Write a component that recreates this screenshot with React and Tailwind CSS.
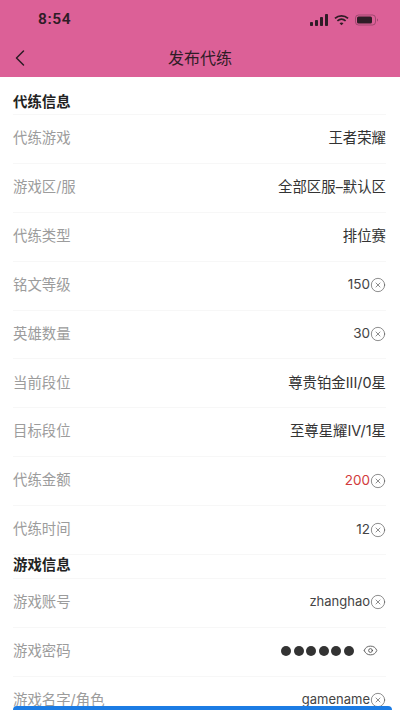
import { ChevronLeft, CircleX, Eye } from "lucide-react";

const font = "font-['Inter','Noto_Sans_CJK_SC',sans-serif]";

function Row({ label, value, clear, red, small, children }) {
  let valueClass = "text-[14.4px] text-[#333]";
  if (red) valueClass = "text-[13.5px] text-[#d23b3b]";
  else if (small) valueClass = "text-[13px] text-[#444]";
  else if (clear) valueClass = "text-[13.5px] text-[#444]";
  return (
    <div className="flex h-[48.9px] items-center justify-between border-b border-[#f7f7f7] pb-[2px]">
      <span className="text-[14.4px] text-[#9c9c9c]">{label}</span>
      <div className="flex items-center">
        {value && <span className={valueClass}>{value}</span>}
        {clear && <CircleX size={16} strokeWidth={1} className="mt-[1px] text-[#555]" />}
        {children}
      </div>
    </div>
  );
}

export default function App() {
  return (
    <div className={`relative h-[710px] w-[400px] overflow-hidden bg-white ${font}`}>
      <header className="h-[77px] bg-[#dc6097] text-[#2f1c26]">
        <div className="flex h-[39px] items-center justify-between pl-[38px] pr-[21px]">
          <span className="text-[15.5px] font-semibold tracking-[0.6px] font-['Roboto',sans-serif]">8:54</span>
          <div className="flex items-center gap-[6px]">
            <svg width="18" height="12" viewBox="0 0 18 12" fill="currentColor">
              <rect x="0" y="8" width="3" height="4" rx="0.8" />
              <rect x="5" y="6" width="3" height="6" rx="0.8" />
              <rect x="10" y="3" width="3" height="9" rx="0.8" />
              <rect x="15" y="0" width="3" height="12" rx="0.8" />
            </svg>
            <svg width="15" height="12" viewBox="0 0 16 12" fill="none" stroke="currentColor" strokeWidth="1.9">
              <path d="M1 4.2C5 .6 11 .6 15 4.2" />
              <path d="M3.6 7C6.2 4.8 9.8 4.8 12.4 7" />
              <path d="M8 11.6 5.9 9.4C7.1 8.4 8.9 8.4 10.1 9.4Z" fill="currentColor" stroke="none" />
            </svg>
            <svg width="24" height="12" viewBox="0 0 24 12" fill="none">
              <rect x="0.5" y="1" width="20" height="10" rx="3" stroke="currentColor" strokeOpacity="0.35" />
              <rect x="2" y="2.5" width="15" height="7" rx="1.5" fill="currentColor" />
              <path d="M22 4.5c1 .4 1 2.6 0 3z" fill="currentColor" fillOpacity="0.5" />
            </svg>
          </div>
        </div>
        <div className="relative flex h-[38px] items-center justify-center">
          <ChevronLeft size={28} strokeWidth={1.3} className="absolute left-[6px] top-[5px]" />
          <h1 className="text-[16px] font-normal">发布代练</h1>
        </div>
      </header>

      <main className="px-[13px] pr-[14px]">
        <h2 className="flex h-[38px] items-center border-b border-[#f7f7f7] pt-[12px] text-[14.4px] font-bold text-[#222]">代练信息</h2>
        <Row label="代练游戏" value="王者荣耀" />
        <Row label="游戏区/服" value="全部区服–默认区" />
        <Row label="代练类型" value="排位赛" />
        <Row label="铭文等级" value="150" clear />
        <Row label="英雄数量" value="30" clear />
        <Row label="当前段位" value="尊贵铂金III/0星" />
        <Row label="目标段位" value="至尊星耀IV/1星" />
        <Row label="代练金额" value="200" clear red />
        <Row label="代练时间" value="12" clear />
        <h2 className="flex h-[24px] items-center border-b border-[#f7f7f7] pb-[4px] text-[14.4px] font-bold text-[#222]">游戏信息</h2>
        <Row label="游戏账号" value="zhanghao" clear small />
        <Row label="游戏密码">
          <div className="flex gap-[2.6px]">
            {[0, 1, 2, 3, 4, 5].map((i) => (
              <span key={i} className="h-[10px] w-[10px] rounded-full bg-[#333]" />
            ))}
          </div>
          <Eye size={15} strokeWidth={1.3} className="ml-[9px] mr-[8px] text-[#444]" />
        </Row>
        <Row label="游戏名字/角色" value="gamename" clear small />
      </main>

      {/* bottom button, cut off by the window */}
      <div className="absolute bottom-0 left-[13px] h-[4px] w-[379px] rounded-t-[4px] bg-[#1c7ce4]" />
    </div>
  );
}
